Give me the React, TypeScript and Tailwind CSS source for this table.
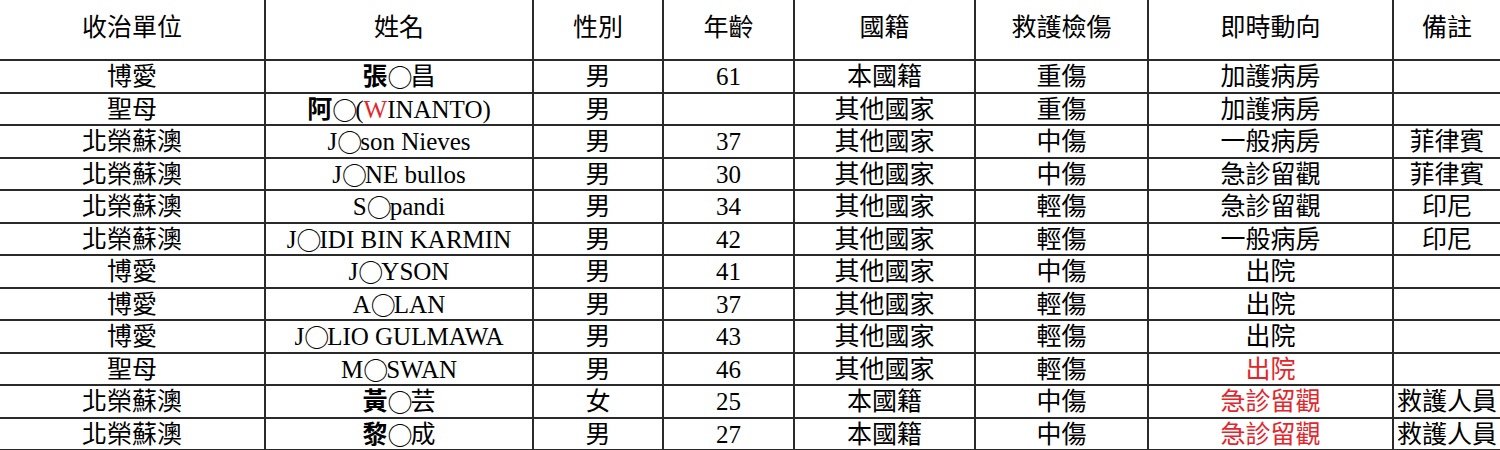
import React from "react";

const widths = ["w-[266px]", "w-[268px]", "w-[130px]", "w-[131px]", "w-[181px]", "w-[173px]", "w-[245px]", "w-[106px]"];

const header = ["收治單位", "姓名", "性別", "年齡", "國籍", "救護檢傷", "即時動向", "備註"];

const B = ({ c }: { c: string }) => <span className="font-bold">{c}</span>;
const O = () => (
  <span className="inline-block w-[23px] text-center" style={{ fontFamily: '"Noto Sans CJK TC", sans-serif' }}>
    ○
  </span>
);

const n = (a: string, b: string) => (
  <>
    {a}
    <O />
    {b}
  </>
);

const rows: { cells: React.ReactNode[]; redStatus?: boolean }[] = [
  { cells: ["博愛", <><B c="張" /><O />昌</>, "男", "61", "本國籍", "重傷", "加護病房", ""] },
  { cells: ["聖母", <><B c="阿" /><O />(<span className="text-[#e3262b]">W</span>INANTO)</>, "男", "", "其他國家", "重傷", "加護病房", ""] },
  { cells: ["北榮蘇澳", n("J", "son Nieves"), "男", "37", "其他國家", "中傷", "一般病房", "菲律賓"] },
  { cells: ["北榮蘇澳", n("J", "NE bullos"), "男", "30", "其他國家", "中傷", "急診留觀", "菲律賓"] },
  { cells: ["北榮蘇澳", n("S", "pandi"), "男", "34", "其他國家", "輕傷", "急診留觀", "印尼"] },
  { cells: ["北榮蘇澳", n("J", "IDI BIN KARMIN"), "男", "42", "其他國家", "輕傷", "一般病房", "印尼"] },
  { cells: ["博愛", n("J", "YSON"), "男", "41", "其他國家", "中傷", "出院", ""] },
  { cells: ["博愛", n("A", "LAN"), "男", "37", "其他國家", "輕傷", "出院", ""] },
  { cells: ["博愛", n("J", "LIO GULMAWA"), "男", "43", "其他國家", "輕傷", "出院", ""] },
  { cells: ["聖母", n("M", "SWAN"), "男", "46", "其他國家", "輕傷", "出院", ""], redStatus: true },
  { cells: ["北榮蘇澳", <><B c="黃" /><O />芸</>, "女", "25", "本國籍", "中傷", "急診留觀", "救護人員"], redStatus: true },
  { cells: ["北榮蘇澳", <><B c="黎" /><O />成</>, "男", "27", "本國籍", "中傷", "急診留觀", "救護人員"], redStatus: true },
];

export default function App() {
  return (
    <div
      className="w-[1500px] h-[450px] overflow-hidden bg-white text-black text-[25px] leading-none"
      style={{ fontFamily: '"Liberation Serif", "Noto Sans CJK TC", serif' }}
    >
      <div className="flex h-[61px] border-b-2 border-[#2a2a2a]">
        {header.map((h, i) => (
          <div
            key={i}
            className={`${widths[i]} shrink-0 flex items-center justify-center pb-[4px] ${i < 7 ? "border-r-2 border-[#2a2a2a]" : ""}`}
          >
            {h}
          </div>
        ))}
      </div>
      {rows.map((r, ri) => (
        <div key={ri} className="flex h-[32.5px] border-b-2 border-[#2a2a2a]">
          {r.cells.map((c, i) => (
            <div
              key={i}
              className={`${widths[i]} shrink-0 flex items-center justify-center whitespace-nowrap pt-[1px] ${i < 7 ? "border-r-2 border-[#2a2a2a]" : ""} ${i === 6 && r.redStatus ? "text-[#e3262b]" : ""}`}
            >
              {c}
            </div>
          ))}
        </div>
      ))}
    </div>
  );
}
